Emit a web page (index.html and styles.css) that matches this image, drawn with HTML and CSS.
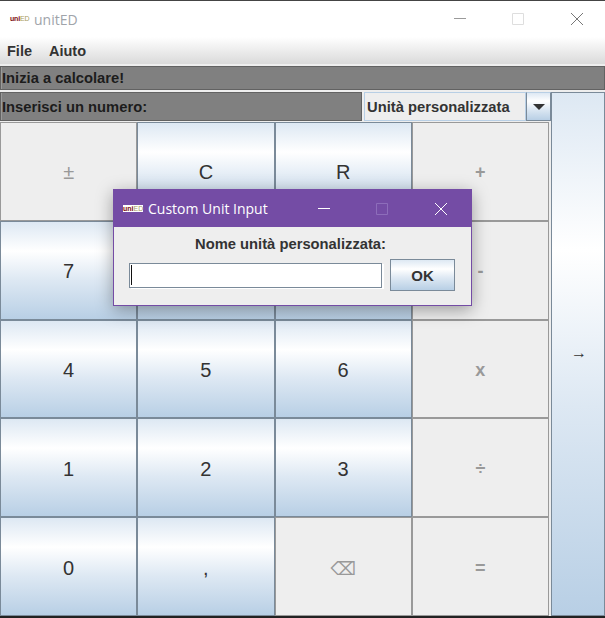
FILE: index.html
```html
<!DOCTYPE html>
<html lang="en">
<head>
    <meta charset="UTF-8">
    <meta name="viewport" content="width=device-width, initial-scale=1.0">
    <title>unitED</title>
    <link rel="stylesheet" href="styles.css">
</head>
<body>
    <div class="window">
        <div class="titlebar">
            <span class="logo"><b>uni</b><i>ED</i></span>
            <span class="title">unitED</span>
            <div class="controls">
                <svg width="12" height="12" viewBox="0 0 12 12"><path d="M0 5.5H12" stroke="#9a9a9a" fill="none"/></svg>
                <svg width="12" height="12" viewBox="0 0 12 12"><path d="M.5 .5H11.5V11.5H.5Z" stroke="#dedede" fill="none"/></svg>
                <svg width="12" height="12" viewBox="0 0 12 12"><path d="M0 0L12 12M12 0L0 12" stroke="#777" fill="none"/></svg>
            </div>
        </div>
        <div class="menubar">
            <span>File</span>
            <span>Aiuto</span>
        </div>
        <div class="status">Inizia a calcolare!</div>
        <div class="main">
            <div class="left">
                <div class="input-row">
                    <div class="prompt">Inserisci un numero:</div>
                    <div class="combo">
                        <div class="combo-text">Unità personalizzata</div>
                        <div class="combo-arrow"><span class="triangle"></span></div>
                    </div>
                </div>
                <div class="keys">
                    <button class="key off">±</button>
                    <button class="key">C</button>
                    <button class="key">R</button>
                    <button class="key off strong">+</button>
                    <button class="key">7</button>
                    <button class="key">8</button>
                    <button class="key">9</button>
                    <button class="key off strong">-</button>
                    <button class="key">4</button>
                    <button class="key">5</button>
                    <button class="key">6</button>
                    <button class="key off strong">x</button>
                    <button class="key">1</button>
                    <button class="key">2</button>
                    <button class="key">3</button>
                    <button class="key off strong">÷</button>
                    <button class="key">0</button>
                    <button class="key">,</button>
                    <button class="key off erase">⌫</button>
                    <button class="key off strong">=</button>
                </div>
            </div>
            <button class="next">→</button>
        </div>
        <div class="taskbar"></div>

        <!-- Custom unit dialog -->
        <div class="dialog">
            <div class="dialog-title">
                <span class="logo small"><b>uni</b><i>ED</i></span>
                <span class="dialog-name">Custom Unit Input</span>
                <div class="dialog-controls">
                    <svg width="12" height="12" viewBox="0 0 12 12"><path d="M0 5.5H12" stroke="#fff" fill="none"/></svg>
                    <svg width="12" height="12" viewBox="0 0 12 12"><path d="M.5 .5H11.5V11.5H.5Z" stroke="#8d6dba" fill="none"/></svg>
                    <svg width="12" height="12" viewBox="0 0 12 12"><path d="M0 0L12 12M12 0L0 12" stroke="#fff" fill="none"/></svg>
                </div>
            </div>
            <div class="dialog-body">
                <div class="dialog-label">Nome unità personalizzata:</div>
                <div class="dialog-row">
                    <div class="field"><span class="caret"></span></div>
                    <button class="ok">OK</button>
                </div>
            </div>
        </div>
    </div>
</body>
</html>
```

FILE: styles.css
```css
/* Basic Styling */
body {
    margin: 0;
    font-family: "Liberation Sans", Arial, sans-serif;
    color: #333;
    overflow: hidden;
}
.window {
    position: relative;
    width: 605px;
    height: 618px;
    display: flex;
    flex-direction: column;
    background-color: #eee;
    border-top: 1px solid #444;
    box-sizing: border-box;
}

/* Title bar */
.titlebar {
    height: 36px;
    flex: none;
    display: flex;
    align-items: center;
    padding-left: 10px;
    background-color: #fff;
}
.logo {
    width: 18px;
    flex: none;
    margin-right: 6px;
    font-size: 7px;
    line-height: 8px;
    letter-spacing: -0.2px;
    white-space: nowrap;
}
.logo b {
    color: #7a0c0c;
}
.logo i {
    font-style: normal;
    color: #a89a5c;
}
.title {
    font-family: "Open Sans", sans-serif;
    font-size: 14px;
    color: #a0a4aa;
}
.controls {
    margin-left: auto;
    margin-right: 22px;
    display: flex;
    gap: 46px;
}
.controls svg:last-child {
    margin-left: 1px;
}

/* Menu */
.menubar {
    height: 27px;
    flex: none;
    display: flex;
    align-items: center;
    gap: 17px;
    padding-left: 7px;
    font-size: 14.5px;
    font-weight: bold;
    background: linear-gradient(#fff, #dadada);
    border-bottom: 2px solid #eee;
}

/* Label rows */
.status, .prompt {
    box-sizing: border-box;
    background-color: #808080;
    border: 1px solid #626262;
    box-shadow: inset 1px 0 0 #9a9a9a;
    color: #1c1c1c;
    font-size: 14.75px;
    font-weight: bold;
    padding-left: 1px;
    display: flex;
    align-items: center;
}
.status {
    height: 24px;
    flex: none;
    margin-bottom: 2px;
}
.main {
    flex: 1;
    min-height: 0;
    display: flex;
}
.left {
    width: 551px;
    flex: none;
    display: flex;
    flex-direction: column;
}
.input-row {
    height: 29px;
    flex: none;
    display: flex;
    gap: 2px;
    margin-bottom: 1px;
}
.prompt {
    flex: 1;
}
.combo {
    width: 187px;
    flex: none;
    display: flex;
}
.combo-text {
    flex: 1;
    box-sizing: border-box;
    border: 1px solid #b8cfe5;
    background-color: #eee;
    font-size: 14.75px;
    font-weight: bold;
    padding-left: 2px;
    display: flex;
    align-items: center;
}
.combo-arrow {
    width: 25px;
    box-sizing: border-box;
    border: 1px solid #7a8a99;
    border-top-color: #b8cfe5;
    background: linear-gradient(#dde8f3, #fff 30%, #dde8f3 60%, #b8cfe5);
    display: flex;
    align-items: center;
    justify-content: center;
}
.triangle {
    width: 0;
    height: 0;
    border-left: 6px solid transparent;
    border-right: 6px solid transparent;
    border-top: 6px solid #333;
}

/* Calculator keys */
.keys {
    flex: 1;
    min-height: 0;
    width: 549px;
    display: grid;
    grid-template-columns: repeat(4, 1fr);
    grid-template-rows: repeat(5, 1fr);
}
.key, .next, .ok {
    margin: 0;
    padding: 0;
    font-family: "Liberation Sans", Arial, sans-serif;
    color: #333;
    border: 1px solid #7a8a99;
    background: linear-gradient(#dde8f3, #fff 30%, #dde8f3 60%, #b8cfe5);
}
.key {
    font-size: 20px;
    padding-top: 3px;
}
.key.off {
    background: #eee;
    border-color: #999;
    color: #999;
}
.key.strong {
    font-weight: bold;
    font-size: 18px;
}
.key.erase {
    font-family: "DejaVu Sans", sans-serif;
    font-size: 18px;
}
.next {
    flex: 1;
    font-size: 16px;
    font-weight: bold;
    padding: 0 0 2px 2px;
}
.taskbar {
    height: 2px;
    flex: none;
    background-color: #222;
}

/* Dialog */
.dialog {
    position: absolute;
    left: 113px;
    top: 188px;
    width: 359px;
    height: 117px;
    box-sizing: border-box;
    border: 1px solid #744ca5;
    background-color: #eee;
    box-shadow: 0 4px 16px rgba(0, 0, 0, 0.35);
    display: flex;
    flex-direction: column;
}
.dialog-title {
    height: 37px;
    flex: none;
    display: flex;
    align-items: center;
    padding-left: 9px;
    background-color: #744ca5;
}
.logo.small {
    width: 20px;
    height: 7px;
    margin-right: 5px;
    background-color: #fff;
    font-size: 7px;
    line-height: 7px;
    letter-spacing: 0;
}
.dialog-name {
    font-family: "Open Sans", sans-serif;
    font-size: 14px;
    color: #fff;
}
.dialog-controls {
    margin-left: auto;
    margin-right: 24px;
    display: flex;
    gap: 46px;
}
.dialog-controls svg:last-child {
    margin-left: 1px;
}
.dialog-body {
    flex: 1;
    display: flex;
    flex-direction: column;
    align-items: center;
    padding-top: 9px;
}
.dialog-label {
    font-size: 14.75px;
    font-weight: bold;
    line-height: 16px;
    margin-right: 4px;
}
.dialog-row {
    align-self: stretch;
    display: flex;
    align-items: center;
    gap: 8px;
    margin-top: 7px;
    padding-left: 15px;
}
.field {
    width: 253px;
    height: 25px;
    box-sizing: border-box;
    background-color: #fff;
    border: 1px solid #7a8a99;
    box-shadow: 2px 1px 0 #fff;
    padding: 1px 0 0 1px;
}
.caret {
    display: block;
    width: 1px;
    height: 20px;
    background-color: #111;
}
.ok {
    width: 65px;
    height: 32px;
    font-size: 15px;
    font-weight: bold;
}
```
